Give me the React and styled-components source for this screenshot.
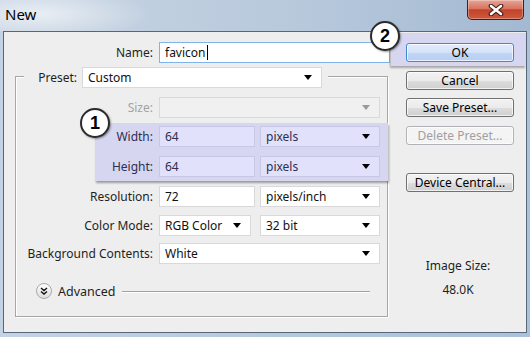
import React from 'react'
import styled, { createGlobalStyle } from 'styled-components'

const GlobalStyle = createGlobalStyle`
  html, body {
    margin: 0;
    padding: 0;
    overflow: hidden;
  }
  body {
    font-family: 'Noto Sans', 'DejaVu Sans', sans-serif;
    font-size: 12px;
    color: #1e1e1e;
  }
  * {
    box-sizing: border-box;
  }
`

const Dropdown = ({ children, width, disabled, tinted }) => (
  <Select $width={width} $disabled={disabled} $tinted={tinted}>
    <span>{children}</span>
    <Arrow $disabled={disabled} />
  </Select>
)

const App = () => {
  return (
    <Window>
      <GlobalStyle />
      <TitleBar>
        <Title>New</Title>
        <CloseButton>
          <svg width='16' height='12' viewBox='0 0 16 12'>
            <path d='M3 2 L13 10 M13 2 L3 10' stroke='#3a1810' strokeWidth='4.6' strokeLinecap='round' />
            <path d='M3 2 L13 10 M13 2 L3 10' stroke='#ffffff' strokeWidth='2.6' strokeLinecap='round' />
          </svg>
        </CloseButton>
      </TitleBar>
      <Client>
        <LeftPane>
          <NameRow>
            <Label>Name:</Label>
            <TextField $focused>
              favicon<Caret />
            </TextField>
          </NameRow>
          <GroupBox>
            <Legend>
              <LegendLabel>Preset:</LegendLabel>
              <Dropdown width={240}>Custom</Dropdown>
            </Legend>
            <Row $label={137} $top={9}>
              <Label $disabled>Size:</Label>
              <Dropdown width={221} disabled />
            </Row>
            <Highlight>
              <Badge $x={-15} $y={-15}>1</Badge>
              <Row $label={58}>
                <Label $tinted>Width:</Label>
                <Controls>
                  <TextField $width={96} $tinted>64</TextField>
                  <Dropdown width={120} tinted>pixels</Dropdown>
                </Controls>
              </Row>
              <Row $label={58}>
                <Label $tinted>Height:</Label>
                <Controls>
                  <TextField $width={96} $tinted>64</TextField>
                  <Dropdown width={120} tinted>pixels</Dropdown>
                </Controls>
              </Row>
            </Highlight>
            <Row $label={137} $top={5}>
              <Label>Resolution:</Label>
              <Controls>
                <TextField $width={96}>72</TextField>
                <Dropdown width={120}>pixels/inch</Dropdown>
              </Controls>
            </Row>
            <Row $label={137} $top={8}>
              <Label>Color Mode:</Label>
              <Controls>
                <Dropdown width={92}>RGB Color</Dropdown>
                <Dropdown width={120}>32 bit</Dropdown>
              </Controls>
            </Row>
            <Row $label={137} $top={7}>
              <Label>Background Contents:</Label>
              <Dropdown width={221}>White</Dropdown>
            </Row>
            <AdvancedRow>
              <svg width='16' height='16' viewBox='0 0 16 16'>
                <defs>
                  <linearGradient id='adv' x1='0' y1='0' x2='0' y2='1'>
                    <stop offset='0' stopColor='#ffffff' />
                    <stop offset='1' stopColor='#dcdcdc' />
                  </linearGradient>
                </defs>
                <circle cx='8' cy='8' r='7.5' fill='url(#adv)' stroke='#a8a8a8' />
                <path d='M5 5 L8 7.5 L11 5 M5 8.5 L8 11 L11 8.5' fill='none' stroke='#111' strokeWidth='1.4' />
              </svg>
              <AdvancedText>Advanced</AdvancedText>
              <Rule />
            </AdvancedRow>
          </GroupBox>
        </LeftPane>
        <RightPane>
          <OkHighlight>
            <Badge $x={-21} $y={-12}>2</Badge>
            <Button $primary>OK</Button>
          </OkHighlight>
          <Button $top={5} $indent>Cancel</Button>
          <Button $top={8} $indent>Save Preset...</Button>
          <Button $top={9} $indent $disabled>Delete Preset...</Button>
          <Button $top={28} $indent>Device Central...</Button>
          <Info $top={66}>Image Size:</Info>
          <Info $top={8}>48.0K</Info>
        </RightPane>
      </Client>
    </Window>
  )
}

const Window = styled.div`
  width: 530px;
  height: 337px;
  display: flex;
  flex-direction: column;
  background: linear-gradient(to right, #c4d3e3 0%, #b7c9dc 50%, #a9c1da 100%);
`

const TitleBar = styled.div`
  height: 31px;
  flex-shrink: 0;
  display: flex;
  justify-content: space-between;
  align-items: flex-start;
  padding: 0 6px 0 5px;
  background:
    radial-gradient(ellipse 110px 26px at 40px 14px, rgba(255, 255, 255, 0.6), rgba(255, 255, 255, 0) 100%),
    linear-gradient(to right, #c9d6e4 0%, #b8c9dc 55%, #a3b9d2 100%);
`

const Title = styled.span`
  margin-top: 4px;
  font-size: 15px;
  line-height: 20px;
  color: #000;
`

const CloseButton = styled.div`
  width: 57px;
  height: 20px;
  margin-left: auto;
  border: 1px solid #4a1c14;
  border-top: none;
  border-radius: 0 0 5px 5px;
  background: linear-gradient(to bottom, #e7a597 0%, #d8745f 45%, #c3432b 52%, #cd5a3c 100%);
  box-shadow: inset 0 0 0 1px rgba(255, 255, 255, 0.3);
  display: flex;
  align-items: center;
  justify-content: center;
`

const Client = styled.div`
  flex: 1;
  margin: 0 3px 4px 3px;
  border: 1px solid #56677a;
  background: #eeeeee;
  display: flex;
`

const LeftPane = styled.div`
  width: 386px;
  flex-shrink: 0;
`

const NameRow = styled.div`
  margin-top: 10px;
  display: grid;
  grid-template-columns: 149px 231px;
  column-gap: 6px;
  align-items: center;
`

const Label = styled.div`
  text-align: right;
  white-space: nowrap;
  color: ${p => (p.$disabled ? '#a3a3a3' : p.$tinted ? '#2e2e50' : '#1e1e1e')};
`

const TextField = styled.div`
  width: ${p => (p.$width ? `${p.$width}px` : 'auto')};
  height: 21px;
  padding: 0 5px;
  display: flex;
  align-items: center;
  border: 1px solid ${p => (p.$focused ? '#7eb4ea' : p.$tinted ? '#c8c8e4' : '#d9d9d9')};
  background: ${p => (p.$tinted ? '#e1e1fb' : '#ffffff')};
  color: ${p => (p.$tinted ? '#2e2e50' : '#111')};
`

const Caret = styled.span`
  width: 1px;
  height: 15px;
  margin-left: 1px;
  background: #000;
`

const Select = styled.div`
  width: ${p => p.$width}px;
  height: 21px;
  padding: 0 9px 0 5px;
  display: flex;
  align-items: center;
  justify-content: space-between;
  border: 1px solid ${p => (p.$tinted ? '#c8c8e4' : '#d9d9d9')};
  background: ${p => (p.$disabled ? '#f0f0f0' : p.$tinted ? '#e1e1fb' : '#ffffff')};
  color: ${p => (p.$tinted ? '#2e2e50' : '#111')};
  white-space: nowrap;
`

const Arrow = styled.span`
  width: 0;
  height: 0;
  border-left: 4.5px solid transparent;
  border-right: 4.5px solid transparent;
  border-top: 5px solid ${p => (p.$disabled ? '#9a9a9a' : '#000')};
`

const GroupBox = styled.div`
  width: 373px;
  margin: 13px 0 0 11px;
  padding: 0 7px 17px 0;
  border: 1px solid #a6a6a6;
  box-shadow: inset 1px 1px 0 #ffffff, 1px 1px 0 #ffffff;
`

const Legend = styled.div`
  width: fit-content;
  margin: -10px 0 0 8px;
  padding-right: 6px;
  display: flex;
  align-items: center;
  gap: 5px;
  background: #eeeeee;
`

const LegendLabel = styled.div`
  width: 53px;
  text-align: right;
`

const Row = styled.div`
  display: grid;
  grid-template-columns: ${p => p.$label}px 221px;
  column-gap: 6px;
  align-items: center;
  margin-top: ${p => p.$top || 0}px;
`

const Controls = styled.div`
  display: flex;
  justify-content: space-between;
`

const Highlight = styled.div`
  position: relative;
  margin: 5px -8px 0 79px;
  padding: 3px 8px 4px 0;
  display: flex;
  flex-direction: column;
  gap: 9px;
  background: #d6d6f1;
  box-shadow: 1px 2px 2px rgba(0, 0, 0, 0.35);
`

const Badge = styled.div`
  position: absolute;
  left: ${p => p.$x}px;
  top: ${p => p.$y}px;
  width: 30px;
  height: 30px;
  border-radius: 50%;
  border: 2px solid #2b2b2b;
  background: #ffffff;
  box-shadow: 1px 1px 2px rgba(0, 0, 0, 0.4);
  display: flex;
  align-items: center;
  justify-content: center;
  font: bold 18px 'Liberation Sans', Arial, sans-serif;
  color: #000;
  z-index: 2;
`

const AdvancedRow = styled.div`
  height: 16px;
  margin-top: 19px;
  padding-left: 20px;
  display: flex;
  align-items: center;
`

const AdvancedText = styled.span`
  margin-left: 6px;
  font-size: 12.5px;
`

const Rule = styled.div`
  flex: 1;
  height: 1px;
  margin: 0 10px 0 6px;
  background: #a0a0a0;
  box-shadow: 0 1px 0 #ffffff;
`

const RightPane = styled.div`
  flex: 1;
  display: flex;
  flex-direction: column;
  align-items: flex-start;
`

const OkHighlight = styled.div`
  position: relative;
  align-self: stretch;
  height: 33px;
  margin: 1px 0 0 1px;
  padding: 10px 0 0 15px;
  background: #d6d6f1;
  box-shadow: -1px 2px 2px rgba(0, 0, 0, 0.3);
`

const Button = styled.div`
  width: 108px;
  height: 19px;
  margin-top: ${p => p.$top || 0}px;
  margin-left: ${p => (p.$indent ? 16 : 0)}px;
  display: flex;
  align-items: center;
  justify-content: center;
  border-radius: 3px;
  border: 1px solid ${p => (p.$primary ? '#3d8ad6' : p.$disabled ? '#b0b4b8' : '#707070')};
  background: ${p =>
    p.$primary
      ? 'linear-gradient(to bottom, #e2ebfb 0%, #d4e2f8 50%, #c1d6f5 51%, #b7cff3 100%)'
      : p.$disabled
        ? '#f4f4f4'
        : 'linear-gradient(to bottom, #f2f2f2 0%, #ebebeb 50%, #dddddd 51%, #cfcfcf 100%)'};
  box-shadow: inset 0 0 0 1px rgba(255, 255, 255, 0.7);
  color: ${p => (p.$disabled ? '#a0a0a0' : '#000')};
  white-space: nowrap;
`

const Info = styled.div`
  align-self: stretch;
  margin-top: ${p => p.$top}px;
  text-align: center;
  line-height: 16px;
`

export default App
